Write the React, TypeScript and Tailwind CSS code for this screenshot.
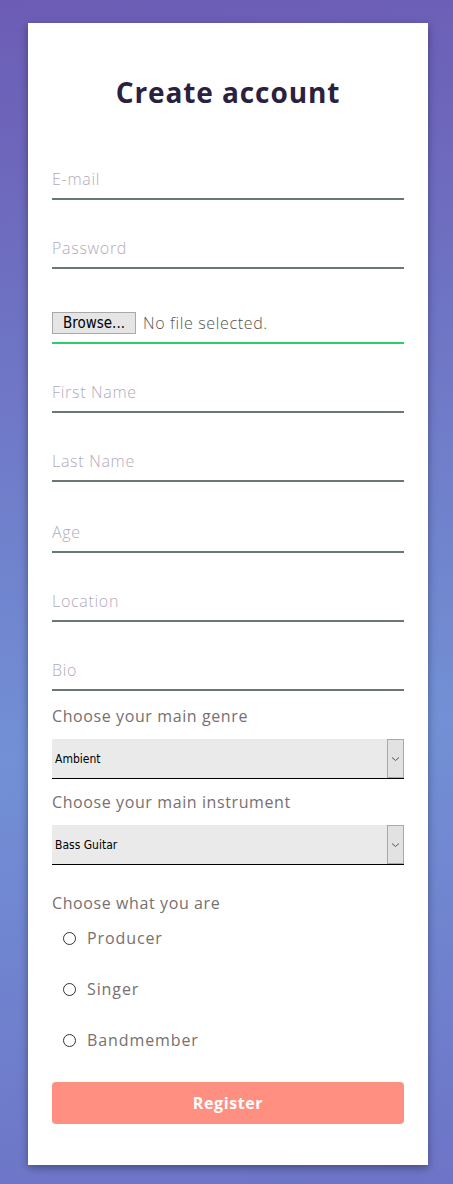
const textFields = [
  { label: "E-mail", type: "email", gap: "mt-[42px]" },
  { label: "Password", type: "password", gap: "mt-[29px]" },
];

const moreFields = [
  { label: "First Name", gap: "mt-[29px]" },
  { label: "Last Name", gap: "mt-[29px]" },
  { label: "Age", gap: "mt-[31px]" },
  { label: "Location", gap: "mt-[29px]" },
  { label: "Bio", gap: "mt-[29px]" },
];

const roles = ["Producer", "Singer", "Bandmember"];

function Field({ label, type = "text", gap }: { label: string; type?: string; gap: string }) {
  return (
    <input
      type={type}
      placeholder={label}
      className={`${gap} block w-full h-[40px] border-b-2 border-[#6b7776] bg-transparent text-[16px] font-light tracking-[0.7px] text-[#444] placeholder:text-[#b3aabd] outline-none`}
    />
  );
}

function Select({ value, options, gap }: { value: string; options: string[]; gap: string }) {
  return (
    <div className={`${gap} flex h-[40px] w-full bg-[#eaeaea] border-b border-black`}>
      <select
        defaultValue={value}
        className="flex-1 appearance-none bg-transparent px-[3px] text-[12px] text-black outline-none font-['DejaVu_Sans',sans-serif] [font-stretch:condensed]"
      >
        {options.map((o) => (
          <option key={o}>{o}</option>
        ))}
      </select>
      <div className="w-[17px] h-[39px] border border-[#a9a9a9] bg-[#e2e2e2] flex items-center justify-center">
        <svg width="9" height="6" viewBox="0 0 9 6">
          <path d="M1 1.5 L4.5 4.5 L8 1.5" fill="none" stroke="#555" strokeWidth="1" />
        </svg>
      </div>
    </div>
  );
}

export default function App() {
  return (
    <div className="min-h-[1184px] pt-[23px] bg-[linear-gradient(175deg,#6c5cb5_0%,#7290d6_62%,#6d74c7_100%)] font-['Open_Sans',sans-serif]">
      <form className="mx-[28px] w-[400px] bg-white px-6 pt-[43px] pb-[41px] shadow-[0_3px_8px_rgba(0,0,0,0.35)]">
        <h2 className="h-[52px] leading-[52px] text-center text-[28px] font-bold text-[#2a2140] tracking-[0.9px]">
          Create account
        </h2>

        {textFields.map((f) => (
          <Field key={f.label} label={f.label} type={f.type} gap={f.gap} />
        ))}

        <label className="mt-[35px] flex items-center h-[40px] border-b-2 border-[#2ecc71] cursor-pointer">
          <input type="file" className="hidden" />
          <span className="h-[22px] leading-[20px] px-[10px] border border-[#a9a9a9] bg-[#e5e5e5] text-[15px] text-black font-['DejaVu_Sans',sans-serif] [font-stretch:condensed]">
            Browse...
          </span>
          <span className="ml-[7px] text-[16px] font-light tracking-[0.65px] text-[#555]">No file selected.</span>
        </label>

        {moreFields.map((f) => (
          <Field key={f.label} label={f.label} gap={f.gap} />
        ))}

        <p className="mt-[13px] h-[24px] leading-[24px] text-[16px] tracking-[0.6px] text-[#777070]">Choose your main genre</p>
        <Select gap="mt-[11px]" value="Ambient" options={["Ambient", "Rock", "Pop", "Jazz"]} />

        <p className="mt-[11px] h-[24px] leading-[24px] text-[16px] tracking-[0.6px] text-[#777070]">Choose your main instrument</p>
        <Select gap="mt-[11px]" value="Bass Guitar" options={["Bass Guitar", "Guitar", "Drums", "Vocals"]} />

        <p className="mt-[26px] h-[24px] leading-[24px] text-[16px] tracking-[0.6px] text-[#777070]">Choose what you are</p>
        {roles.map((r, i) => (
          <label key={r} className={`${i === 0 ? "mt-[11px]" : "mt-[27px]"} flex items-center h-[24px] ml-[11px] cursor-pointer`}>
            <input type="radio" name="role" className="appearance-none w-[13px] h-[13px] rounded-full border border-[#333] bg-white" />
            <span className="ml-[11px] text-[16px] tracking-[0.9px] text-[#777070]">{r}</span>
          </label>
        ))}

        <button
          type="button"
          className="mt-[30px] w-full h-[42px] rounded-[4px] bg-[#ff8f80] text-white text-[16px] font-bold tracking-[0.6px]"
        >
          Register
        </button>
      </form>
    </div>
  );
}
